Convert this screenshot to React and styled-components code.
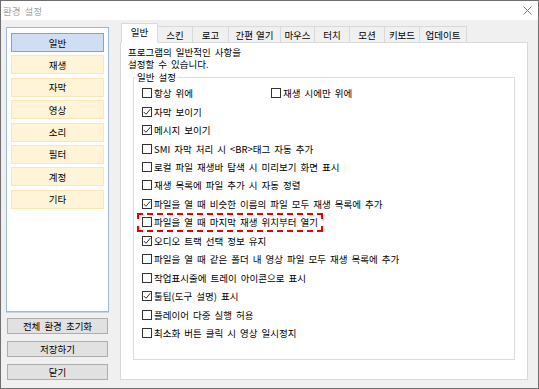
import React from 'react';
import styled, { createGlobalStyle } from 'styled-components';

const GlobalStyle = createGlobalStyle`
  html, body {
    margin: 0;
    padding: 0;
    background: #f0f0f0;
  }
  body {
    font-family: "Noto Sans CJK KR", "Noto Sans", sans-serif;
    font-size: 9.5px;
    word-spacing: 1.9px;
    color: #000;
  }
`;

const Window = styled.div`
  width: 539px;
  height: 389px;
  box-sizing: border-box;
  border: 1px solid #6f6f6f;
  display: flex;
  flex-direction: column;
  background: #f0f0f0;
`;

const TitleBar = styled.div`
  height: 19px;
  background: #fff;
  display: flex;
  align-items: center;
  justify-content: space-between;
  padding: 0 6px 0 2px;
`;

const Title = styled.span`
  color: #a3a3a3;
`;

const Body = styled.div`
  flex: 1;
  display: flex;
  min-height: 0;
`;

const Sidebar = styled.div`
  width: 103px;
  margin-left: 5px;
  padding-top: 7px;
  display: flex;
  flex-direction: column;
`;

const ListBox = styled.div`
  height: 285px;
  box-sizing: border-box;
  background: #fff;
  border: 1px solid #9fb8d2;
  box-shadow: 0 1px 0 #c6d5e4;
  padding: 5px 4px;
  display: flex;
  flex-direction: column;
  gap: 3.4px;
`;

const NavItem = styled.div`
  height: 19px;
  box-sizing: border-box;
  display: flex;
  align-items: center;
  justify-content: center;
  background: ${p => (p.$active ? '#cfdef2' : '#fff4d8')};
  border: 1px solid ${p => (p.$active ? '#7fa4d0' : '#fde5b6')};
`;

const SideButtons = styled.div`
  margin-top: 6px;
  margin-left: 1px;
  display: flex;
  flex-direction: column;
  gap: 7px;
`;

const SideButton = styled.div`
  width: 101px;
  height: 16px;
  box-sizing: border-box;
  background: #e1e1e1;
  border: 1px solid #adadad;
  display: flex;
  align-items: center;
  justify-content: center;
`;

const TabArea = styled.div`
  margin-left: 11px;
  width: 408px;
  padding-top: 4px;
  display: flex;
  flex-direction: column;
`;

const TabStrip = styled.div`
  height: 19px;
  display: flex;
  align-items: flex-end;
  padding-left: 1px;
  position: relative;
  z-index: 1;
  margin-bottom: -1px;
`;

const Tab = styled.div`
  width: ${p => p.$w}px;
  height: ${p => (p.$active ? 20 : 17)}px;
  box-sizing: border-box;
  display: flex;
  align-items: center;
  justify-content: center;
  word-spacing: 1px;
  padding-bottom: ${p => (p.$active ? 2 : 0)}px;
  background: ${p => (p.$active ? '#fff' : '#f0f0f0')};
  border: 1px solid #d9d9d9;
  border-left: ${p => (p.$first || p.$active ? '1px solid #d9d9d9' : 'none')};
  border-bottom: ${p => (p.$active ? '1px solid #fff' : '1px solid #d9d9d9')};
`;

const Panel = styled.div`
  height: 338px;
  box-sizing: border-box;
  background: #fff;
  border: 1px solid #d9d9d9;
  padding: 4px 11px 0 7px;
`;

const Description = styled.div`
  line-height: 11.5px;
`;

const GroupBox = styled.fieldset`
  margin: 2px 0 0 5px;
  width: 382px;
  height: 288px;
  box-sizing: border-box;
  border: 1px solid #dcdcdc;
  padding: 1px 0 0 8px;
  display: flex;
  flex-direction: column;
`;

const Legend = styled.legend`
  padding: 0 2px;
  margin-left: -7px;
  line-height: 11px;
`;

const OptionRow = styled.div`
  height: 18.46px;
  box-sizing: border-box;
  display: flex;
  align-items: center;
`;

const MarkedRow = styled(OptionRow)`
  align-self: flex-start;
  margin-left: -5px;
  padding: 0 3px;
  border: 2px dashed #ee0000;
`;

const Option = styled.label`
  display: flex;
  align-items: center;
  gap: 2px;
  width: ${p => (p.$w ? `${p.$w}px` : 'auto')};
  white-space: nowrap;
`;

const Box = styled.span`
  width: 10px;
  height: 10px;
  box-sizing: border-box;
  border: 1px solid #333;
  background: #fff;
  display: inline-flex;
  align-items: center;
  justify-content: center;
  flex-shrink: 0;
`;

const CheckBox = ({ checked }) => (
  <Box>
    {checked && (
      <svg width="8" height="8" viewBox="0 0 8 8">
        <polyline points="0.8,4 3,6.3 7.3,1.2" fill="none" stroke="#333" strokeWidth="1" />
      </svg>
    )}
  </Box>
);

const CloseIcon = () => (
  <svg width="9" height="9" viewBox="0 0 9 9">
    <path d="M0.5 0.5 L8.5 8.5 M8.5 0.5 L0.5 8.5" stroke="#7a7a7a" strokeWidth="1" />
  </svg>
);

const navItems = ['일반', '재생', '자막', '영상', '소리', '필터', '계정', '기타'];

const tabs = [
  ['일반', 37],
  ['스킨', 35],
  ['로고', 36],
  ['간편 열기', 52],
  ['마우스', 34],
  ['터치', 35],
  ['모션', 35],
  ['키보드', 35],
  ['업데이트', 47],
];

const options = [
  ['자막 보이기', true],
  ['메시지 보이기', true],
  ['SMI 자막 처리 시 <BR>태그 자동 추가', false],
  ['로컬 파일 재생바 탐색 시 미리보기 화면 표시', false],
  ['재생 목록에 파일 추가 시 자동 정렬', false],
  ['파일을 열 때 비슷한 이름의 파일 모두 재생 목록에 추가', true],
  ['파일을 열 때 마지막 재생 위치부터 열기', false, true],
  ['오디오 트랙 선택 정보 유지', true],
  ['파일을 열 때 같은 폴더 내 영상 파일 모두 재생 목록에 추가', false],
  ['작업표시줄에 트레이 아이콘으로 표시', false],
  ['툴팁(도구 설명) 표시', true],
  ['플레이어 다중 실행 허용', false],
  ['최소화 버튼 클릭 시 영상 일시정지', false],
];

export default function App() {
  return (
    <>
      <GlobalStyle />
      <Window>
        <TitleBar>
          <Title>환경 설정</Title>
          <CloseIcon />
        </TitleBar>
        <Body>
          <Sidebar>
            <ListBox>
              {navItems.map((n, i) => (
                <NavItem key={n} $active={i === 0}>{n}</NavItem>
              ))}
            </ListBox>
            <SideButtons>
              <SideButton>전체 환경 초기화</SideButton>
              <SideButton>저장하기</SideButton>
              <SideButton>닫기</SideButton>
            </SideButtons>
          </Sidebar>
          <TabArea>
            <TabStrip>
              {tabs.map(([t, w], i) => (
                <Tab key={t} $w={w} $active={i === 0} $first={i === 0}>{t}</Tab>
              ))}
            </TabStrip>
            <Panel>
              <Description>
                프로그램의 일반적인 사항을
                <br />
                설정할 수 있습니다.
              </Description>
              <GroupBox>
                <Legend>일반 설정</Legend>
                <OptionRow>
                  <Option $w={129}>
                    <CheckBox />항상 위에
                  </Option>
                  <Option>
                    <CheckBox />재생 시에만 위에
                  </Option>
                </OptionRow>
                {options.map(([label, checked, marked]) => {
                  const Row = marked ? MarkedRow : OptionRow;
                  return (
                    <Row key={label}>
                      <Option>
                        <CheckBox checked={checked} />
                        {label}
                      </Option>
                    </Row>
                  );
                })}
              </GroupBox>
            </Panel>
          </TabArea>
        </Body>
      </Window>
    </>
  );
}
